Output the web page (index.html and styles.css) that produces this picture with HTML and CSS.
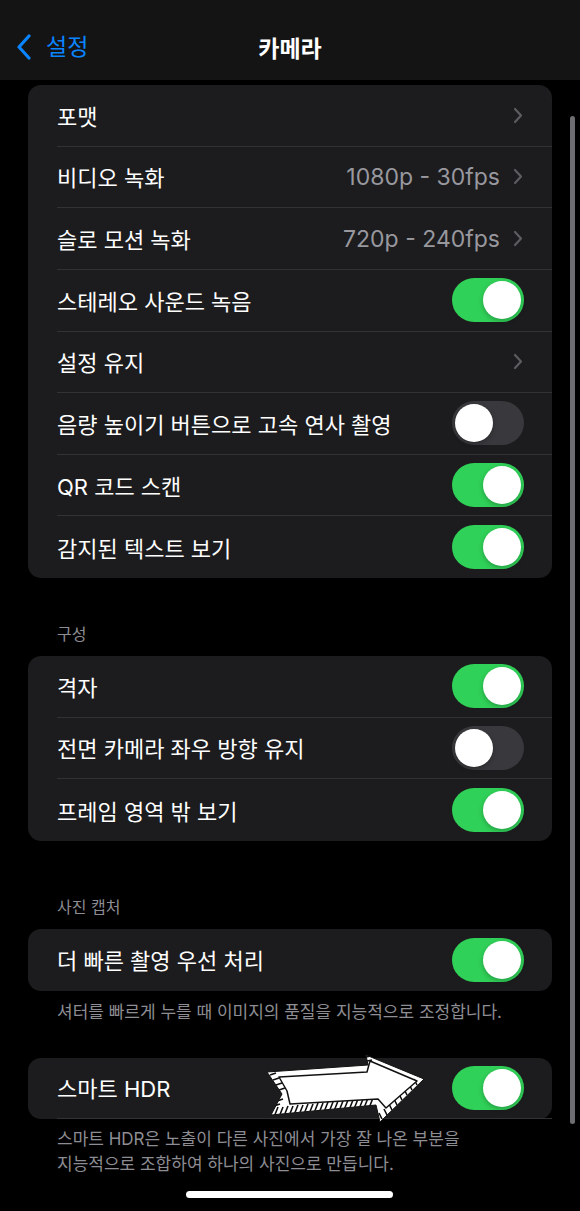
FILE: index.html
```html
<!DOCTYPE html>
<html lang="ko">
<head>
<meta charset="utf-8">
<link rel="stylesheet" href="styles.css">
</head>
<body>
<div class="screen">
  <header class="nav">
    <div class="back">
      <svg class="back-chev" width="16" height="26" viewBox="0 0 16 26"><path d="M13 2 L3 13 L13 24" fill="none" stroke="#0a84ff" stroke-width="3.2" stroke-linecap="round" stroke-linejoin="round"/></svg>
      <span>설정</span>
    </div>
    <div class="title">카메라</div>
  </header>

  <main class="content">
    <section class="group first">
      <div class="row"><div class="row-inner"><span class="label">포맷</span><span class="right"><svg class="chev" width="10" height="17" viewBox="0 0 10 17"><path d="M2 2 L8 8.5 L2 15" fill="none" stroke="#5c5c61" stroke-width="2.2" stroke-linecap="round" stroke-linejoin="round"/></svg></span></div></div>
      <div class="row"><div class="row-inner"><span class="label">비디오 녹화</span><span class="right"><span class="value">1080p - 30fps</span><svg class="chev" width="10" height="17" viewBox="0 0 10 17"><path d="M2 2 L8 8.5 L2 15" fill="none" stroke="#5c5c61" stroke-width="2.2" stroke-linecap="round" stroke-linejoin="round"/></svg></span></div></div>
      <div class="row"><div class="row-inner"><span class="label">슬로 모션 녹화</span><span class="right"><span class="value">720p - 240fps</span><svg class="chev" width="10" height="17" viewBox="0 0 10 17"><path d="M2 2 L8 8.5 L2 15" fill="none" stroke="#5c5c61" stroke-width="2.2" stroke-linecap="round" stroke-linejoin="round"/></svg></span></div></div>
      <div class="row"><div class="row-inner"><span class="label">스테레오 사운드 녹음</span><span class="toggle on"><span class="knob"></span></span></div></div>
      <div class="row"><div class="row-inner"><span class="label">설정 유지</span><span class="right"><svg class="chev" width="10" height="17" viewBox="0 0 10 17"><path d="M2 2 L8 8.5 L2 15" fill="none" stroke="#5c5c61" stroke-width="2.2" stroke-linecap="round" stroke-linejoin="round"/></svg></span></div></div>
      <div class="row"><div class="row-inner"><span class="label">음량 높이기 버튼으로 고속 연사 촬영</span><span class="toggle"><span class="knob"></span></span></div></div>
      <div class="row"><div class="row-inner"><span class="label">QR 코드 스캔</span><span class="toggle on"><span class="knob"></span></span></div></div>
      <div class="row"><div class="row-inner"><span class="label">감지된 텍스트 보기</span><span class="toggle on"><span class="knob"></span></span></div></div>
    </section>

    <div class="section-head sh1">구성</div>
    <section class="group">
      <div class="row"><div class="row-inner"><span class="label">격자</span><span class="toggle on"><span class="knob"></span></span></div></div>
      <div class="row"><div class="row-inner"><span class="label">전면 카메라 좌우 방향 유지</span><span class="toggle"><span class="knob"></span></span></div></div>
      <div class="row"><div class="row-inner"><span class="label">프레임 영역 밖 보기</span><span class="toggle on"><span class="knob"></span></span></div></div>
    </section>

    <div class="section-head sh2">사진 캡처</div>
    <section class="group">
      <div class="row"><div class="row-inner"><span class="label">더 빠른 촬영 우선 처리</span><span class="toggle on"><span class="knob"></span></span></div></div>
    </section>
    <p class="foot f1">셔터를 빠르게 누를 때 이미지의 품질을 지능적으로 조정합니다.</p>

    <section class="group hdr">
      <div class="row"><div class="row-inner"><span class="label">스마트 HDR</span><span class="toggle on"><span class="knob"></span></span></div></div>
      <svg class="arrow" width="170" height="75" viewBox="0 0 170 75">
        <defs>
          <clipPath id="band">
            <polygon points="7,21 108,14 106,4 164,28 120,71 116,54 11,64 22,43"/>
          </clipPath>
        </defs>
        <polygon points="7,21 108,14 106,4 164,28 120,71 116,54 11,64 22,43" fill="#fff" stroke="#111" stroke-width="1"/>
        <g clip-path="url(#band)" stroke="#111" stroke-width="1.6">
          <path d="M14 66 l4 -10 M19 66 l4 -10 M24 65 l4 -10 M29 65 l4 -10 M34 64 l4 -10 M39 64 l4 -10 M44 63 l4 -10 M49 63 l4 -10 M54 62 l4 -10 M59 62 l4 -10 M64 61 l4 -10 M69 61 l4 -10 M74 60 l4 -10 M79 60 l4 -10 M84 59 l4 -10 M89 59 l4 -10 M94 58 l4 -10 M99 58 l4 -10 M104 57 l4 -10 M109 57 l4 -10"/>
          <path d="M122 68 l-3 -6 M127 64 l-3 -6 M132 59 l-3 -6 M137 54 l-3 -6 M142 49 l-3 -6 M147 44 l-3 -6 M152 39 l-3 -6 M157 34 l-3 -6"/>
          <path d="M10 24 l6 -2 M13 29 l6 -2 M16 34 l6 -2 M19 39 l6 -2 M17 50 l6 -2 M14 55 l6 -2"/>
          <path d="M106 6 l5 -1 M107 10 l5 -1"/>
        </g>
        <polygon points="19,26 107,21 110,10 157,30 126,57 118,48 30,53 27,40" fill="#fff" stroke="#111" stroke-width="1.5" stroke-linejoin="round"/>
      </svg>
    </section>
    <p class="foot f2">스마트 HDR은 노출이 다른 사진에서 가장 잘 나온 부분을<br>지능적으로 조합하여 하나의 사진으로 만듭니다.</p>
  </main>

  <div class="scrollbar"></div>
  <div class="home"></div>
</div>
</body>
</html>
```

FILE: styles.css
```css
* { box-sizing: border-box; }
html, body {
  margin: 0;
  padding: 0;
  background: #000;
}
body {
  font-family: Inter, "Noto Sans CJK KR", sans-serif;
  color: #fff;
}
.screen {
  position: relative;
  width: 580px;
  height: 1211px;
  overflow: hidden;
  background: #000;
}
.nav {
  height: 80px;
  background: #141414;
  display: grid;
  grid-template-columns: 1fr auto 1fr;
  align-items: center;
  padding-top: 14px;
}
.back {
  display: flex;
  align-items: center;
  gap: 14px;
  padding-left: 16px;
  color: #0a84ff;
  font-size: 23px;
}
.back span { line-height: 26px; }
.title {
  font-size: 23px;
  font-weight: 700;
}
.content {
  padding: 5px 28px 0 28px;
}
.group {
  background: #1c1c1e;
  border-radius: 13px;
  overflow: hidden;
}
.hdr { position: relative; overflow: visible; }
.row {
  height: 61.625px;
  padding-left: 29px;
}
.row-inner {
  height: 100%;
  display: flex;
  align-items: center;
  justify-content: space-between;
  padding-right: 28px;
  border-bottom: 1px solid #323235;
}
.row:last-child .row-inner { border-bottom: none; }
.label {
  font-size: 22px;
  color: #fff;
  margin-top: -1px;
}
.right {
  display: flex;
  align-items: center;
  gap: 13px;
}
.value {
  font-size: 23px;
  color: #98989e;
}
.chev { display: block; margin-right: 1px; }
.toggle {
  width: 72px;
  height: 44px;
  border-radius: 22px;
  background: #39393d;
  display: flex;
  align-items: center;
  padding: 0 3px;
  justify-content: flex-start;
}
.toggle.on {
  background: #30d158;
  justify-content: flex-end;
}
.knob {
  width: 38px;
  height: 38px;
  border-radius: 50%;
  background: #fff;
  box-shadow: 0 2px 5px rgba(0,0,0,0.25);
}
.section-head {
  font-size: 16px;
  line-height: 20px;
  color: #8d8d93;
  padding-left: 29px;
  padding-bottom: 12px;
}
.sh1 { padding-top: 46px; }
.sh2 { padding-top: 56px; }
.foot {
  margin: 0;
  font-size: 17px;
  color: #8d8d93;
  padding-left: 29px;
}
.f1 { line-height: 20px; padding-top: 11px; padding-bottom: 36px; }
.f2 { line-height: 25px; padding-top: 8px; }
.arrow {
  position: absolute;
  left: 232px;
  top: -7px;
}
.scrollbar {
  position: absolute;
  left: 570px;
  top: 116px;
  width: 5px;
  height: 1008px;
  border-radius: 3px;
  background: #6e6e72;
}
.home {
  position: absolute;
  left: 186px;
  top: 1191px;
  width: 207px;
  height: 7px;
  border-radius: 4px;
  background: #fff;
}
```
